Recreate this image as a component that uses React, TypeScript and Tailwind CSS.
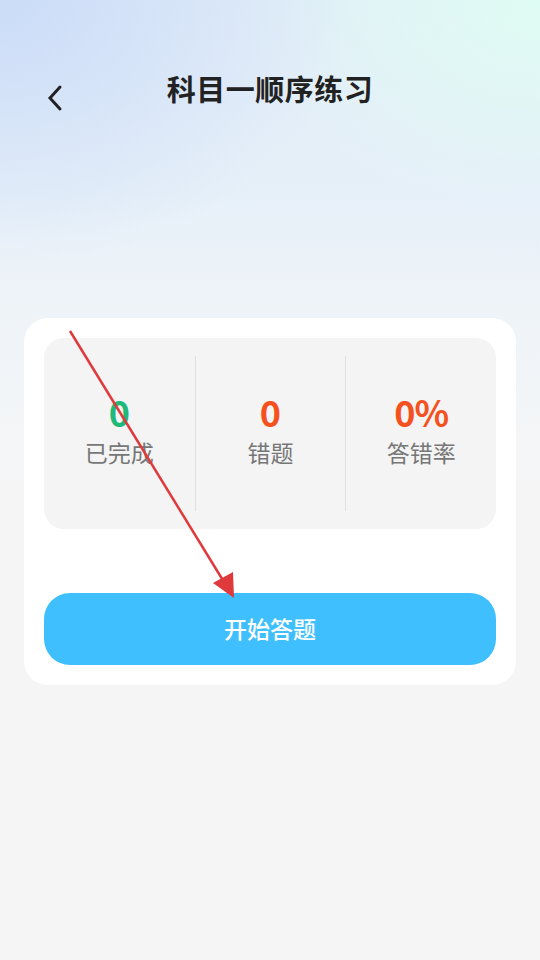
export default function App() {
  const font = { fontFamily: '"Noto Sans CJK SC", "Noto Sans", sans-serif' };
  return (
    <main
      className="relative w-[540px] h-[960px] overflow-hidden bg-[#f5f5f6]"
      style={font}
    >
      {/* background glow */}
      <div className="absolute inset-x-0 top-0 h-[480px] bg-[linear-gradient(180deg,rgba(245,245,246,0)_40%,#f5f6f7_100%),radial-gradient(ellipse_65%_55%_at_0%_0%,#cbdcf8_0%,rgba(203,220,248,0)_100%),radial-gradient(ellipse_55%_45%_at_100%_0%,#dffcf3_0%,rgba(223,252,243,0)_100%),linear-gradient(180deg,#e2edf8_0%,#edf4f9_100%)]" />

      <div className="relative flex flex-col">
        <header className="relative h-[180px] flex items-start justify-center pt-[69px]">
          <button className="absolute left-[40px] top-[80px] w-[30px] h-[36px] flex items-center justify-center text-[#222]">
            <svg width="20" height="30" viewBox="0 0 20 30" fill="none">
              <path d="M15 4 L5 15 L15 26" stroke="currentColor" strokeWidth="3" strokeLinecap="round" strokeLinejoin="miter" />
            </svg>
          </button>
          <h1 className="text-[29px] leading-[38px] font-semibold text-[#222] tracking-[0.5px]">科目一顺序练习</h1>
        </header>

        <section className="mt-[138px] mx-[24px] bg-white rounded-[24px] p-[20px] pb-[20px]">
          <div className="bg-[#f4f4f4] rounded-[20px] h-[191px] grid grid-cols-3 items-center py-[18px]">
            <div className="flex flex-col items-center justify-center gap-[6px] h-full pb-[10px]">
              <span className="text-[36px] leading-[40px] font-bold text-[#1fb97a]">0</span>
              <span className="text-[23px] leading-[30px] text-[#777]">已完成</span>
            </div>
            <div className="flex flex-col items-center justify-center gap-[6px] h-full pb-[10px] border-l border-[#e0e0e0]">
              <span className="text-[36px] leading-[40px] font-bold text-[#f5511e]">0</span>
              <span className="text-[23px] leading-[30px] text-[#777]">错题</span>
            </div>
            <div className="flex flex-col items-center justify-center gap-[6px] h-full pb-[10px] border-l border-[#e0e0e0]">
              <span className="text-[36px] leading-[40px] font-bold text-[#f5511e] tracking-[-1px]">0%</span>
              <span className="text-[23px] leading-[30px] text-[#777]">答错率</span>
            </div>
          </div>

          <button className="mt-[64px] w-full h-[72px] rounded-[26px] bg-[#40bfff] text-white text-[23px] leading-[30px] font-medium pb-[2px]">
            开始答题
          </button>
        </section>
      </div>

      {/* annotation arrow */}
      <svg className="absolute inset-0 pointer-events-none" width="540" height="960" viewBox="0 0 540 960">
        <line x1="70" y1="331" x2="224" y2="582" stroke="#e0393b" strokeWidth="2.5" />
        <polygon points="234,598 213,583 233,572" fill="#e0393b" />
      </svg>
    </main>
  );
}
